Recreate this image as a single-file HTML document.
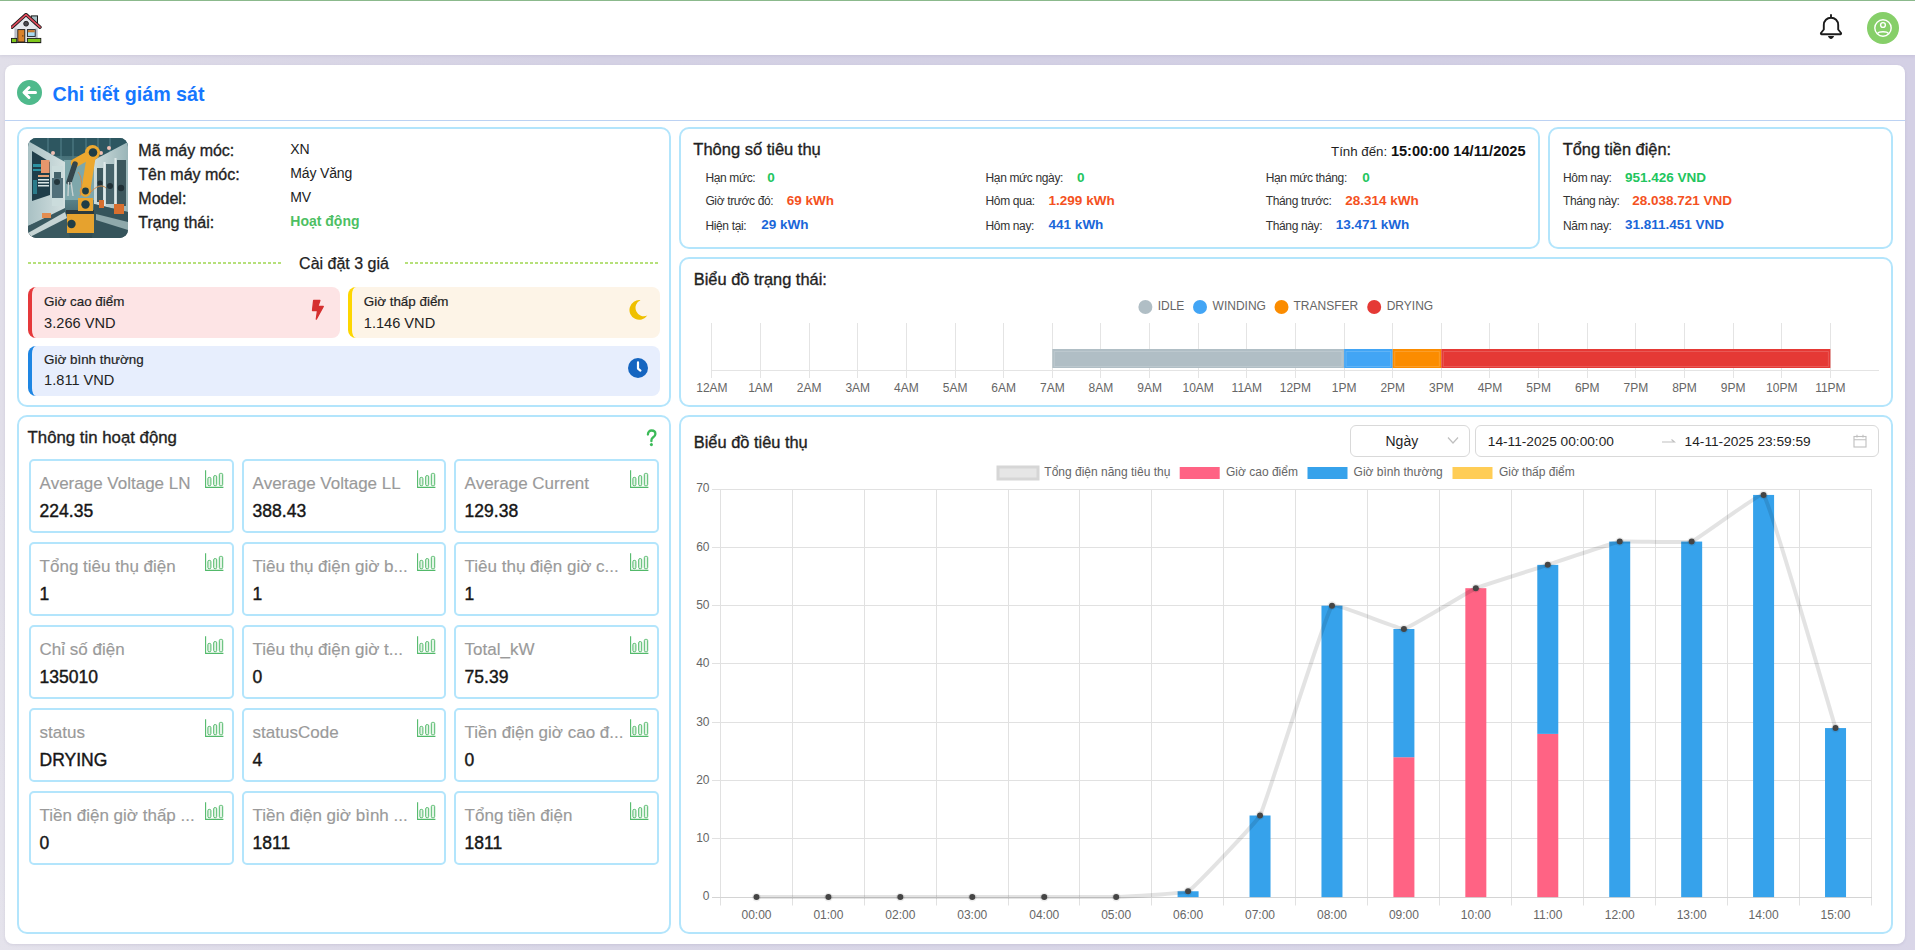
<!DOCTYPE html>
<html><head><meta charset="utf-8"><title>Chi tiết giám sát</title>
<style>
html,body{margin:0;padding:0;}
body{width:1915px;height:950px;overflow:hidden;position:relative;font-family:"Liberation Sans", sans-serif;background:linear-gradient(180deg,rgba(255,255,255,0) 0px,rgba(255,255,255,0) 400px,rgba(255,255,255,0.13) 950px),linear-gradient(90deg,#e1dfe9 0px,#dcd9e7 160px,#d4d1e4 600px,#d2cfe4 1400px,#d4d0e5 1915px);}
.t{position:absolute;white-space:nowrap;}
</style></head><body>
<div style="position:absolute;left:0;top:0;width:1915px;height:1px;background:#8dbb8d"></div>
<div style="position:absolute;left:0;top:1px;width:1915px;height:54px;background:#fff;box-shadow:0 1px 3px rgba(70,60,120,0.10)"></div>
<svg style="position:absolute;left:11px;top:13px" width="31" height="31" viewBox="0 0 31 31">
<rect x="20.3" y="2.9" width="6.2" height="9" fill="#a9c0c6" stroke="#1a1a1a" stroke-width="1"/>
<polygon points="3,14.5 15,3 27,14.5 27,28.5 3,28.5" fill="#e6e8ee"/>
<rect x="3.6" y="15.5" width="2.2" height="12" fill="#b8bcc6"/>
<rect x="24.3" y="15.5" width="2.2" height="12" fill="#b8bcc6"/>
<polyline points="1,14.2 15,1.6 29,14.2" fill="none" stroke="#1a1a1a" stroke-width="3.4" stroke-linejoin="round" stroke-linecap="round"/>
<polyline points="1,14.2 15,1.6 29,14.2" fill="none" stroke="#e04a5c" stroke-width="1.7" stroke-linejoin="round" stroke-linecap="round"/>
<circle cx="15.1" cy="10.7" r="2.4" fill="#4a4850" stroke="#1a1a1a" stroke-width="0.9"/>
<rect x="6.8" y="16.6" width="7" height="12.4" fill="#d9822b" stroke="#1a1a1a" stroke-width="0.9"/>
<rect x="11.2" y="22.2" width="1.2" height="1.4" fill="#6a3a10"/>
<rect x="16.4" y="16.6" width="7.8" height="6.8" fill="#a8dcf2" stroke="#1a1a1a" stroke-width="0.9"/>
<rect x="16.9" y="17.1" width="6.8" height="2.2" fill="#c8782a"/>
<rect x="0.5" y="25.4" width="5.2" height="4.3" fill="#7ec71c" stroke="#1a1a1a" stroke-width="0.9"/>
<rect x="16.4" y="25.4" width="13.4" height="4.3" fill="#7ec71c" stroke="#1a1a1a" stroke-width="0.9"/>
<line x1="0.3" y1="29.5" x2="30" y2="29.5" stroke="#1a1a1a" stroke-width="0.9"/>
</svg>
<svg style="position:absolute;left:1818px;top:14px" width="26" height="27" viewBox="0 0 26 27">
<path d="M13 1 V3.7 M5.8 15.5 V11 C5.8 6.6 9 3.7 13 3.7 C17 3.7 20.2 6.6 20.2 11 V15.5 L23 19 C23.3 19.6 23 20.2 22.4 20.2 H3.6 C3 20.2 2.7 19.6 3 19 Z" fill="none" stroke="#1c1c1c" stroke-width="1.9" stroke-linejoin="round" stroke-linecap="round"/>
<path d="M9.9 22.1 H16.1 C15.4 24 14.4 24.9 13 24.9 C11.6 24.9 10.6 24 9.9 22.1 Z" fill="#1c1c1c"/>
</svg>
<svg style="position:absolute;left:1867px;top:12px" width="32" height="32" viewBox="0 0 32 32">
<circle cx="16" cy="16" r="16" fill="#86cf69"/>
<circle cx="16" cy="16" r="8.2" fill="none" stroke="#fff" stroke-width="1.4"/>
<circle cx="16" cy="13" r="2.4" fill="none" stroke="#fff" stroke-width="1.4"/>
<path d="M10.5 21.6 C12 19.2 20 19.2 21.5 21.6" fill="none" stroke="#fff" stroke-width="1.4"/>
</svg>
<div style="position:absolute;left:5px;top:65px;width:1900px;height:879px;background:#fff;border-radius:8px;box-shadow:0 1px 3px rgba(80,70,120,0.12)"></div>
<svg style="position:absolute;left:17px;top:80px" width="25" height="25" viewBox="0 0 25 25">
<circle cx="12.5" cy="12.5" r="12.5" fill="#4fba8c"/>
<path d="M18.5 12.5 H7.5 M12 7.5 L7 12.5 L12 17.5" fill="none" stroke="#fff" stroke-width="3" stroke-linecap="round" stroke-linejoin="round"/>
</svg>
<div class="t" style="left:52.50px;top:84.64px;font-size:19.7px;line-height:19.7px;color:#1677ff;font-weight:700;">Chi tiết giám sát</div>
<div style="position:absolute;left:5px;top:120px;width:1900px;height:1px;background:#bcd2f3"></div>
<div style="position:absolute;left:17px;top:127px;width:654px;height:280px;box-sizing:border-box;border:2px solid #b3e5fc;border-radius:10px;"></div>
<div style="position:absolute;left:17px;top:415px;width:654px;height:519px;box-sizing:border-box;border:2px solid #b3e5fc;border-radius:10px;"></div>
<div style="position:absolute;left:679px;top:127px;width:861px;height:122px;box-sizing:border-box;border:2px solid #b3e5fc;border-radius:10px;"></div>
<div style="position:absolute;left:1548px;top:127px;width:345px;height:122px;box-sizing:border-box;border:2px solid #b3e5fc;border-radius:10px;"></div>
<div style="position:absolute;left:679px;top:257px;width:1214px;height:150px;box-sizing:border-box;border:2px solid #b3e5fc;border-radius:10px;"></div>
<div style="position:absolute;left:679px;top:415px;width:1214px;height:519px;box-sizing:border-box;border:2px solid #b3e5fc;border-radius:10px;"></div>
<svg style="position:absolute;left:28px;top:138px" width="100" height="100" viewBox="0 0 100 100">
<defs><linearGradient id="bg" x1="0" y1="0" x2="0" y2="1"><stop offset="0" stop-color="#2a525c"/><stop offset="0.45" stop-color="#6d9aa0"/><stop offset="1" stop-color="#2c4850"/></linearGradient>
<linearGradient id="wl" x1="0" y1="0" x2="1" y2="0"><stop offset="0" stop-color="#a9c1c4"/><stop offset="1" stop-color="#d3e0e0"/></linearGradient>
<linearGradient id="wr" x1="0" y1="0" x2="1" y2="0"><stop offset="0" stop-color="#cddcdc"/><stop offset="1" stop-color="#9ab5b8"/></linearGradient>
<clipPath id="cp"><rect width="100" height="100" rx="8.5"/></clipPath></defs>
<g clip-path="url(#cp)">
<rect width="100" height="100" fill="url(#bg)"/>
<rect x="0" y="0" width="100" height="18" fill="#2d5660"/>
<path d="M20 0V20M33 0V22M45 0V22M58 0V20M70 0V20M82 0V18" stroke="#4f7d86" stroke-width="1.2"/>
<rect x="36" y="22" width="30" height="40" fill="#7ea7ab"/>
<polygon points="0,3 37,24 37,72 0,88" fill="url(#wl)"/>
<polygon points="4,13 22,24 22,57 4,63" fill="#1f3e4a"/>
<rect x="13" y="22" width="8.5" height="13" fill="#e8966c"/>
<rect x="5" y="26" width="8" height="3" fill="#2c92a2"/><rect x="5" y="31" width="8" height="2" fill="#2c92a2"/>
<rect x="10" y="37" width="11" height="2" fill="#e3a277"/><rect x="10" y="41" width="11" height="1.5" fill="#d9e6e6"/><rect x="10" y="44" width="11" height="1.5" fill="#d9e6e6"/><rect x="10" y="47" width="11" height="1.5" fill="#d9e6e6"/>
<rect x="5" y="42" width="4" height="14" fill="#2a7b8a"/>
<rect x="24" y="28" width="11" height="40" fill="#cbdcdc"/>
<rect x="26" y="34" width="7" height="16" fill="#45636b"/>
<polygon points="100,4 66,22 66,66 100,74" fill="url(#wr)"/>
<rect x="69" y="30" width="6" height="34" fill="#3f5a60"/><rect x="78" y="26" width="8" height="40" fill="#46636a"/><rect x="89" y="22" width="9" height="46" fill="#3c575d"/>
<rect x="75.5" y="24" width="2" height="44" fill="#dfe9e9"/><rect x="86.5" y="20" width="2" height="48" fill="#dfe9e9"/>
<circle cx="72" cy="45" r="2.5" fill="#1f3036"/><circle cx="82" cy="48" r="3" fill="#1f3036"/><circle cx="93" cy="50" r="3.2" fill="#1f3036"/>
<rect x="24" y="40" width="11" height="20" fill="#52707a"/>
<circle cx="29" cy="44" r="3" fill="#24363c"/>
<polygon points="0,88 37,70 42,100 0,100" fill="#3a5960"/>
<polygon points="0,95 37,74 39,80 0,100" fill="#c6d4d4"/>
<polygon points="100,74 66,66 64,100 100,100" fill="#35545b"/>
<polygon points="100,84 68,76 68,82 100,92" fill="#8fa9ab"/>
<rect x="86" y="66" width="10" height="10" fill="#d86f2e"/><rect x="71" y="62" width="5" height="8" fill="#d86f2e"/>
<rect x="14" y="75" width="9" height="5" fill="#e38d50"/>
<circle cx="25" cy="15" r="2" fill="#f0bfb3"/><circle cx="73" cy="15" r="2" fill="#f0bfb3"/><circle cx="81" cy="10" r="2" fill="#f0bfb3"/>
<rect x="39" y="75" width="27" height="20" fill="#e6a22e"/>
<rect x="38" y="72" width="28" height="4" fill="#2b3a3e"/>
<circle cx="43.5" cy="86" r="4.2" fill="#1f3d46"/>
<rect x="50" y="60" width="15" height="13" fill="#eaa630"/>
<circle cx="57.5" cy="66.5" r="4.2" fill="#1f3d46"/>
<path d="M57.5 54 L63 20" stroke="#eda82f" stroke-width="9" stroke-linecap="round"/>
<circle cx="57.5" cy="53" r="5.8" fill="#eaa630"/><circle cx="57.5" cy="53" r="3.4" fill="#1f3d46"/>
<path d="M63 16 L47 25" stroke="#eda82f" stroke-width="8.5" stroke-linecap="round"/>
<circle cx="64.5" cy="14.5" r="7.5" fill="#eda82f"/><circle cx="65" cy="14.5" r="4.3" fill="#1f3d46"/>
<path d="M47 26 L41 44" stroke="#34464c" stroke-width="5.5" stroke-linecap="round"/>
<path d="M40.5 44 L40 58 M43 44 L45 58" stroke="#c9d2d2" stroke-width="1.4"/>
<path d="M50 34 C55 40 54 50 52 58" stroke="#d28a4a" stroke-width="1" fill="none"/>
<path d="M62 55 C68 48 74 46 78 50" stroke="#d28a4a" stroke-width="1" fill="none"/>
</g></svg>
<div class="t" style="left:138.30px;top:142.71px;font-size:16px;line-height:16px;color:#1f1f1f;font-weight:400;-webkit-text-stroke:0.35px #1f1f1f;">Mã máy móc:</div>
<div class="t" style="left:290.30px;top:142.37px;font-size:14px;line-height:14px;color:#222;font-weight:400;letter-spacing:-0.15px;">XN</div>
<div class="t" style="left:138.30px;top:166.71px;font-size:16px;line-height:16px;color:#1f1f1f;font-weight:400;-webkit-text-stroke:0.35px #1f1f1f;">Tên máy móc:</div>
<div class="t" style="left:290.30px;top:166.37px;font-size:14px;line-height:14px;color:#222;font-weight:400;letter-spacing:-0.15px;">Máy Văng</div>
<div class="t" style="left:138.30px;top:190.71px;font-size:16px;line-height:16px;color:#1f1f1f;font-weight:400;-webkit-text-stroke:0.35px #1f1f1f;">Model:</div>
<div class="t" style="left:290.30px;top:190.37px;font-size:14px;line-height:14px;color:#222;font-weight:400;letter-spacing:-0.15px;">MV</div>
<div class="t" style="left:138.30px;top:214.71px;font-size:16px;line-height:16px;color:#1f1f1f;font-weight:400;-webkit-text-stroke:0.35px #1f1f1f;">Trạng thái:</div>
<div class="t" style="left:290.30px;top:214.37px;font-size:14px;line-height:14px;color:#4dbf63;font-weight:700;">Hoạt động</div>
<div class="t" style="left:-156.00px;width:1000px;text-align:center;top:255.71px;font-size:16px;line-height:16px;color:#222;font-weight:400;-webkit-text-stroke:0.25px #222;">Cài đặt 3 giá</div>
<div style="position:absolute;left:28px;top:262px;width:255px;height:2px;background:repeating-linear-gradient(90deg,#b6e07a 0 3px,transparent 3px 5px)"></div>
<div style="position:absolute;left:405px;top:262px;width:255px;height:2px;background:repeating-linear-gradient(90deg,#b6e07a 0 3px,transparent 3px 5px)"></div>
<div style="position:absolute;left:28px;top:287px;width:312px;height:51px;box-sizing:border-box;background:#fde4e5;border-left:4px solid #e5393b;border-radius:8px"></div>
<div style="position:absolute;left:348px;top:287px;width:312px;height:51px;box-sizing:border-box;background:#fdf4e7;border-left:4px solid #fdd600;border-radius:8px"></div>
<div style="position:absolute;left:28px;top:346px;width:632px;height:50px;box-sizing:border-box;background:#e7eefd;border-left:4px solid #1e86e3;border-radius:8px"></div>
<div class="t" style="left:44.10px;top:294.87px;font-size:13.4px;line-height:13.4px;color:#1f1f1f;font-weight:400;-webkit-text-stroke:0.2px #1f1f1f;">Giờ cao điểm</div>
<div class="t" style="left:44.10px;top:315.57px;font-size:14.6px;line-height:14.6px;color:#222;font-weight:400;">3.266 VND</div>
<div class="t" style="left:363.80px;top:294.87px;font-size:13.4px;line-height:13.4px;color:#1f1f1f;font-weight:400;-webkit-text-stroke:0.2px #1f1f1f;">Giờ thấp điểm</div>
<div class="t" style="left:363.80px;top:315.57px;font-size:14.6px;line-height:14.6px;color:#222;font-weight:400;">1.146 VND</div>
<div class="t" style="left:44.10px;top:353.47px;font-size:13.4px;line-height:13.4px;color:#1f1f1f;font-weight:400;-webkit-text-stroke:0.2px #1f1f1f;">Giờ bình thường</div>
<div class="t" style="left:44.10px;top:373.37px;font-size:14.6px;line-height:14.6px;color:#222;font-weight:400;">1.811 VND</div>
<svg style="position:absolute;left:311px;top:299px" width="14" height="22" viewBox="0 0 14 22">
<path d="M2.6 1.5 H8.9 L6.9 7.4 H12.3 L5.3 20.1 L6.5 11.5 H1.5 Z" fill="#d52f2f" stroke="#d52f2f" stroke-width="1.3" stroke-linejoin="round"/></svg>
<svg style="position:absolute;left:628px;top:299px" width="20" height="22" viewBox="0 0 20 22">
<path d="M12.5 1.2 A9.8 9.8 0 1 0 19.3 16.5 A7.4 7.4 0 0 1 12.5 1.2 Z" fill="#efc000"/></svg>
<svg style="position:absolute;left:628px;top:358px" width="20" height="20" viewBox="0 0 20 20">
<circle cx="10" cy="10" r="10" fill="#1565c0"/><path d="M10 4.4 V10.6 L12.4 12.6" fill="none" stroke="#fff" stroke-width="2.2" stroke-linecap="round" stroke-linejoin="round"/></svg>
<div class="t" style="left:27.60px;top:429.55px;font-size:16.8px;line-height:16.8px;color:#1f1f1f;font-weight:400;-webkit-text-stroke:0.35px #1f1f1f;">Thông tin hoạt động</div>
<svg style="position:absolute;left:645px;top:429px" width="14" height="19" viewBox="0 0 14 19"><path d="M2.9 5.6 C2.9 3 4.6 1.5 6.6 1.5 C8.8 1.5 10.4 3 10.4 5 C10.4 6.9 9 7.7 7.9 8.5 C6.9 9.2 6.4 10 6.4 11.4 V12.2" fill="none" stroke="#3cba58" stroke-width="2.3" stroke-linecap="round"/><circle cx="6.4" cy="15.6" r="1.55" fill="#3cba58"/></svg>
<div style="position:absolute;left:29px;top:459px;width:205px;height:74px;box-sizing:border-box;border:2px solid #b3e5fc;border-radius:5px"></div>
<div class="t" style="left:39.60px;top:474.88px;font-size:17px;line-height:17px;color:#9a9a9a;font-weight:400;-webkit-text-stroke:0.15px #9a9a9a;white-space:nowrap;">Average Voltage LN</div>
<div class="t" style="left:39.60px;top:502.57px;font-size:17.5px;line-height:17.5px;color:#161616;font-weight:400;-webkit-text-stroke:0.4px #161616;">224.35</div>
<svg style="position:absolute;left:204.7px;top:470px" width="19" height="19" viewBox="0 0 19 19">
<path d="M0.6 0.2 V17.4 H18.4" fill="none" stroke="#52b96a" stroke-width="1.1"/>
<rect x="2.9" y="7.4" width="3" height="8.3" rx="1.2" fill="#e4f4e6" stroke="#52b96a" stroke-width="1"/>
<rect x="8.7" y="5.6" width="3" height="10.1" rx="1.2" fill="#e4f4e6" stroke="#52b96a" stroke-width="1"/>
<rect x="14.3" y="3.4" width="3.4" height="12.3" rx="1.2" fill="#e4f4e6" stroke="#52b96a" stroke-width="1"/>
</svg>
<div style="position:absolute;left:242px;top:459px;width:204px;height:74px;box-sizing:border-box;border:2px solid #b3e5fc;border-radius:5px"></div>
<div class="t" style="left:252.60px;top:474.88px;font-size:17px;line-height:17px;color:#9a9a9a;font-weight:400;-webkit-text-stroke:0.15px #9a9a9a;white-space:nowrap;">Average Voltage LL</div>
<div class="t" style="left:252.60px;top:502.57px;font-size:17.5px;line-height:17.5px;color:#161616;font-weight:400;-webkit-text-stroke:0.4px #161616;">388.43</div>
<svg style="position:absolute;left:416.7px;top:470px" width="19" height="19" viewBox="0 0 19 19">
<path d="M0.6 0.2 V17.4 H18.4" fill="none" stroke="#52b96a" stroke-width="1.1"/>
<rect x="2.9" y="7.4" width="3" height="8.3" rx="1.2" fill="#e4f4e6" stroke="#52b96a" stroke-width="1"/>
<rect x="8.7" y="5.6" width="3" height="10.1" rx="1.2" fill="#e4f4e6" stroke="#52b96a" stroke-width="1"/>
<rect x="14.3" y="3.4" width="3.4" height="12.3" rx="1.2" fill="#e4f4e6" stroke="#52b96a" stroke-width="1"/>
</svg>
<div style="position:absolute;left:454px;top:459px;width:205px;height:74px;box-sizing:border-box;border:2px solid #b3e5fc;border-radius:5px"></div>
<div class="t" style="left:464.60px;top:474.88px;font-size:17px;line-height:17px;color:#9a9a9a;font-weight:400;-webkit-text-stroke:0.15px #9a9a9a;white-space:nowrap;">Average Current</div>
<div class="t" style="left:464.60px;top:502.57px;font-size:17.5px;line-height:17.5px;color:#161616;font-weight:400;-webkit-text-stroke:0.4px #161616;">129.38</div>
<svg style="position:absolute;left:629.7px;top:470px" width="19" height="19" viewBox="0 0 19 19">
<path d="M0.6 0.2 V17.4 H18.4" fill="none" stroke="#52b96a" stroke-width="1.1"/>
<rect x="2.9" y="7.4" width="3" height="8.3" rx="1.2" fill="#e4f4e6" stroke="#52b96a" stroke-width="1"/>
<rect x="8.7" y="5.6" width="3" height="10.1" rx="1.2" fill="#e4f4e6" stroke="#52b96a" stroke-width="1"/>
<rect x="14.3" y="3.4" width="3.4" height="12.3" rx="1.2" fill="#e4f4e6" stroke="#52b96a" stroke-width="1"/>
</svg>
<div style="position:absolute;left:29px;top:542px;width:205px;height:74px;box-sizing:border-box;border:2px solid #b3e5fc;border-radius:5px"></div>
<div class="t" style="left:39.60px;top:557.88px;font-size:17px;line-height:17px;color:#9a9a9a;font-weight:400;-webkit-text-stroke:0.15px #9a9a9a;white-space:nowrap;">Tổng tiêu thụ điện</div>
<div class="t" style="left:39.60px;top:585.57px;font-size:17.5px;line-height:17.5px;color:#161616;font-weight:400;-webkit-text-stroke:0.4px #161616;">1</div>
<svg style="position:absolute;left:204.7px;top:553px" width="19" height="19" viewBox="0 0 19 19">
<path d="M0.6 0.2 V17.4 H18.4" fill="none" stroke="#52b96a" stroke-width="1.1"/>
<rect x="2.9" y="7.4" width="3" height="8.3" rx="1.2" fill="#e4f4e6" stroke="#52b96a" stroke-width="1"/>
<rect x="8.7" y="5.6" width="3" height="10.1" rx="1.2" fill="#e4f4e6" stroke="#52b96a" stroke-width="1"/>
<rect x="14.3" y="3.4" width="3.4" height="12.3" rx="1.2" fill="#e4f4e6" stroke="#52b96a" stroke-width="1"/>
</svg>
<div style="position:absolute;left:242px;top:542px;width:204px;height:74px;box-sizing:border-box;border:2px solid #b3e5fc;border-radius:5px"></div>
<div class="t" style="left:252.60px;top:557.88px;font-size:17px;line-height:17px;color:#9a9a9a;font-weight:400;-webkit-text-stroke:0.15px #9a9a9a;white-space:nowrap;">Tiêu thụ điện giờ b...</div>
<div class="t" style="left:252.60px;top:585.57px;font-size:17.5px;line-height:17.5px;color:#161616;font-weight:400;-webkit-text-stroke:0.4px #161616;">1</div>
<svg style="position:absolute;left:416.7px;top:553px" width="19" height="19" viewBox="0 0 19 19">
<path d="M0.6 0.2 V17.4 H18.4" fill="none" stroke="#52b96a" stroke-width="1.1"/>
<rect x="2.9" y="7.4" width="3" height="8.3" rx="1.2" fill="#e4f4e6" stroke="#52b96a" stroke-width="1"/>
<rect x="8.7" y="5.6" width="3" height="10.1" rx="1.2" fill="#e4f4e6" stroke="#52b96a" stroke-width="1"/>
<rect x="14.3" y="3.4" width="3.4" height="12.3" rx="1.2" fill="#e4f4e6" stroke="#52b96a" stroke-width="1"/>
</svg>
<div style="position:absolute;left:454px;top:542px;width:205px;height:74px;box-sizing:border-box;border:2px solid #b3e5fc;border-radius:5px"></div>
<div class="t" style="left:464.60px;top:557.88px;font-size:17px;line-height:17px;color:#9a9a9a;font-weight:400;-webkit-text-stroke:0.15px #9a9a9a;white-space:nowrap;">Tiêu thụ điện giờ c...</div>
<div class="t" style="left:464.60px;top:585.57px;font-size:17.5px;line-height:17.5px;color:#161616;font-weight:400;-webkit-text-stroke:0.4px #161616;">1</div>
<svg style="position:absolute;left:629.7px;top:553px" width="19" height="19" viewBox="0 0 19 19">
<path d="M0.6 0.2 V17.4 H18.4" fill="none" stroke="#52b96a" stroke-width="1.1"/>
<rect x="2.9" y="7.4" width="3" height="8.3" rx="1.2" fill="#e4f4e6" stroke="#52b96a" stroke-width="1"/>
<rect x="8.7" y="5.6" width="3" height="10.1" rx="1.2" fill="#e4f4e6" stroke="#52b96a" stroke-width="1"/>
<rect x="14.3" y="3.4" width="3.4" height="12.3" rx="1.2" fill="#e4f4e6" stroke="#52b96a" stroke-width="1"/>
</svg>
<div style="position:absolute;left:29px;top:625px;width:205px;height:74px;box-sizing:border-box;border:2px solid #b3e5fc;border-radius:5px"></div>
<div class="t" style="left:39.60px;top:640.88px;font-size:17px;line-height:17px;color:#9a9a9a;font-weight:400;-webkit-text-stroke:0.15px #9a9a9a;white-space:nowrap;">Chỉ số điện</div>
<div class="t" style="left:39.60px;top:668.57px;font-size:17.5px;line-height:17.5px;color:#161616;font-weight:400;-webkit-text-stroke:0.4px #161616;">135010</div>
<svg style="position:absolute;left:204.7px;top:636px" width="19" height="19" viewBox="0 0 19 19">
<path d="M0.6 0.2 V17.4 H18.4" fill="none" stroke="#52b96a" stroke-width="1.1"/>
<rect x="2.9" y="7.4" width="3" height="8.3" rx="1.2" fill="#e4f4e6" stroke="#52b96a" stroke-width="1"/>
<rect x="8.7" y="5.6" width="3" height="10.1" rx="1.2" fill="#e4f4e6" stroke="#52b96a" stroke-width="1"/>
<rect x="14.3" y="3.4" width="3.4" height="12.3" rx="1.2" fill="#e4f4e6" stroke="#52b96a" stroke-width="1"/>
</svg>
<div style="position:absolute;left:242px;top:625px;width:204px;height:74px;box-sizing:border-box;border:2px solid #b3e5fc;border-radius:5px"></div>
<div class="t" style="left:252.60px;top:640.88px;font-size:17px;line-height:17px;color:#9a9a9a;font-weight:400;-webkit-text-stroke:0.15px #9a9a9a;white-space:nowrap;">Tiêu thụ điện giờ t...</div>
<div class="t" style="left:252.60px;top:668.57px;font-size:17.5px;line-height:17.5px;color:#161616;font-weight:400;-webkit-text-stroke:0.4px #161616;">0</div>
<svg style="position:absolute;left:416.7px;top:636px" width="19" height="19" viewBox="0 0 19 19">
<path d="M0.6 0.2 V17.4 H18.4" fill="none" stroke="#52b96a" stroke-width="1.1"/>
<rect x="2.9" y="7.4" width="3" height="8.3" rx="1.2" fill="#e4f4e6" stroke="#52b96a" stroke-width="1"/>
<rect x="8.7" y="5.6" width="3" height="10.1" rx="1.2" fill="#e4f4e6" stroke="#52b96a" stroke-width="1"/>
<rect x="14.3" y="3.4" width="3.4" height="12.3" rx="1.2" fill="#e4f4e6" stroke="#52b96a" stroke-width="1"/>
</svg>
<div style="position:absolute;left:454px;top:625px;width:205px;height:74px;box-sizing:border-box;border:2px solid #b3e5fc;border-radius:5px"></div>
<div class="t" style="left:464.60px;top:640.88px;font-size:17px;line-height:17px;color:#9a9a9a;font-weight:400;-webkit-text-stroke:0.15px #9a9a9a;white-space:nowrap;">Total_kW</div>
<div class="t" style="left:464.60px;top:668.57px;font-size:17.5px;line-height:17.5px;color:#161616;font-weight:400;-webkit-text-stroke:0.4px #161616;">75.39</div>
<svg style="position:absolute;left:629.7px;top:636px" width="19" height="19" viewBox="0 0 19 19">
<path d="M0.6 0.2 V17.4 H18.4" fill="none" stroke="#52b96a" stroke-width="1.1"/>
<rect x="2.9" y="7.4" width="3" height="8.3" rx="1.2" fill="#e4f4e6" stroke="#52b96a" stroke-width="1"/>
<rect x="8.7" y="5.6" width="3" height="10.1" rx="1.2" fill="#e4f4e6" stroke="#52b96a" stroke-width="1"/>
<rect x="14.3" y="3.4" width="3.4" height="12.3" rx="1.2" fill="#e4f4e6" stroke="#52b96a" stroke-width="1"/>
</svg>
<div style="position:absolute;left:29px;top:708px;width:205px;height:74px;box-sizing:border-box;border:2px solid #b3e5fc;border-radius:5px"></div>
<div class="t" style="left:39.60px;top:723.88px;font-size:17px;line-height:17px;color:#9a9a9a;font-weight:400;-webkit-text-stroke:0.15px #9a9a9a;white-space:nowrap;">status</div>
<div class="t" style="left:39.60px;top:751.57px;font-size:17.5px;line-height:17.5px;color:#161616;font-weight:400;-webkit-text-stroke:0.4px #161616;">DRYING</div>
<svg style="position:absolute;left:204.7px;top:719px" width="19" height="19" viewBox="0 0 19 19">
<path d="M0.6 0.2 V17.4 H18.4" fill="none" stroke="#52b96a" stroke-width="1.1"/>
<rect x="2.9" y="7.4" width="3" height="8.3" rx="1.2" fill="#e4f4e6" stroke="#52b96a" stroke-width="1"/>
<rect x="8.7" y="5.6" width="3" height="10.1" rx="1.2" fill="#e4f4e6" stroke="#52b96a" stroke-width="1"/>
<rect x="14.3" y="3.4" width="3.4" height="12.3" rx="1.2" fill="#e4f4e6" stroke="#52b96a" stroke-width="1"/>
</svg>
<div style="position:absolute;left:242px;top:708px;width:204px;height:74px;box-sizing:border-box;border:2px solid #b3e5fc;border-radius:5px"></div>
<div class="t" style="left:252.60px;top:723.88px;font-size:17px;line-height:17px;color:#9a9a9a;font-weight:400;-webkit-text-stroke:0.15px #9a9a9a;white-space:nowrap;">statusCode</div>
<div class="t" style="left:252.60px;top:751.57px;font-size:17.5px;line-height:17.5px;color:#161616;font-weight:400;-webkit-text-stroke:0.4px #161616;">4</div>
<svg style="position:absolute;left:416.7px;top:719px" width="19" height="19" viewBox="0 0 19 19">
<path d="M0.6 0.2 V17.4 H18.4" fill="none" stroke="#52b96a" stroke-width="1.1"/>
<rect x="2.9" y="7.4" width="3" height="8.3" rx="1.2" fill="#e4f4e6" stroke="#52b96a" stroke-width="1"/>
<rect x="8.7" y="5.6" width="3" height="10.1" rx="1.2" fill="#e4f4e6" stroke="#52b96a" stroke-width="1"/>
<rect x="14.3" y="3.4" width="3.4" height="12.3" rx="1.2" fill="#e4f4e6" stroke="#52b96a" stroke-width="1"/>
</svg>
<div style="position:absolute;left:454px;top:708px;width:205px;height:74px;box-sizing:border-box;border:2px solid #b3e5fc;border-radius:5px"></div>
<div class="t" style="left:464.60px;top:723.88px;font-size:17px;line-height:17px;color:#9a9a9a;font-weight:400;-webkit-text-stroke:0.15px #9a9a9a;white-space:nowrap;">Tiền điện giờ cao đ...</div>
<div class="t" style="left:464.60px;top:751.57px;font-size:17.5px;line-height:17.5px;color:#161616;font-weight:400;-webkit-text-stroke:0.4px #161616;">0</div>
<svg style="position:absolute;left:629.7px;top:719px" width="19" height="19" viewBox="0 0 19 19">
<path d="M0.6 0.2 V17.4 H18.4" fill="none" stroke="#52b96a" stroke-width="1.1"/>
<rect x="2.9" y="7.4" width="3" height="8.3" rx="1.2" fill="#e4f4e6" stroke="#52b96a" stroke-width="1"/>
<rect x="8.7" y="5.6" width="3" height="10.1" rx="1.2" fill="#e4f4e6" stroke="#52b96a" stroke-width="1"/>
<rect x="14.3" y="3.4" width="3.4" height="12.3" rx="1.2" fill="#e4f4e6" stroke="#52b96a" stroke-width="1"/>
</svg>
<div style="position:absolute;left:29px;top:791px;width:205px;height:74px;box-sizing:border-box;border:2px solid #b3e5fc;border-radius:5px"></div>
<div class="t" style="left:39.60px;top:806.88px;font-size:17px;line-height:17px;color:#9a9a9a;font-weight:400;-webkit-text-stroke:0.15px #9a9a9a;white-space:nowrap;">Tiền điện giờ thấp ...</div>
<div class="t" style="left:39.60px;top:834.57px;font-size:17.5px;line-height:17.5px;color:#161616;font-weight:400;-webkit-text-stroke:0.4px #161616;">0</div>
<svg style="position:absolute;left:204.7px;top:802px" width="19" height="19" viewBox="0 0 19 19">
<path d="M0.6 0.2 V17.4 H18.4" fill="none" stroke="#52b96a" stroke-width="1.1"/>
<rect x="2.9" y="7.4" width="3" height="8.3" rx="1.2" fill="#e4f4e6" stroke="#52b96a" stroke-width="1"/>
<rect x="8.7" y="5.6" width="3" height="10.1" rx="1.2" fill="#e4f4e6" stroke="#52b96a" stroke-width="1"/>
<rect x="14.3" y="3.4" width="3.4" height="12.3" rx="1.2" fill="#e4f4e6" stroke="#52b96a" stroke-width="1"/>
</svg>
<div style="position:absolute;left:242px;top:791px;width:204px;height:74px;box-sizing:border-box;border:2px solid #b3e5fc;border-radius:5px"></div>
<div class="t" style="left:252.60px;top:806.88px;font-size:17px;line-height:17px;color:#9a9a9a;font-weight:400;-webkit-text-stroke:0.15px #9a9a9a;white-space:nowrap;">Tiền điện giờ bình ...</div>
<div class="t" style="left:252.60px;top:834.57px;font-size:17.5px;line-height:17.5px;color:#161616;font-weight:400;-webkit-text-stroke:0.4px #161616;">1811</div>
<svg style="position:absolute;left:416.7px;top:802px" width="19" height="19" viewBox="0 0 19 19">
<path d="M0.6 0.2 V17.4 H18.4" fill="none" stroke="#52b96a" stroke-width="1.1"/>
<rect x="2.9" y="7.4" width="3" height="8.3" rx="1.2" fill="#e4f4e6" stroke="#52b96a" stroke-width="1"/>
<rect x="8.7" y="5.6" width="3" height="10.1" rx="1.2" fill="#e4f4e6" stroke="#52b96a" stroke-width="1"/>
<rect x="14.3" y="3.4" width="3.4" height="12.3" rx="1.2" fill="#e4f4e6" stroke="#52b96a" stroke-width="1"/>
</svg>
<div style="position:absolute;left:454px;top:791px;width:205px;height:74px;box-sizing:border-box;border:2px solid #b3e5fc;border-radius:5px"></div>
<div class="t" style="left:464.60px;top:806.88px;font-size:17px;line-height:17px;color:#9a9a9a;font-weight:400;-webkit-text-stroke:0.15px #9a9a9a;white-space:nowrap;">Tổng tiền điện</div>
<div class="t" style="left:464.60px;top:834.57px;font-size:17.5px;line-height:17.5px;color:#161616;font-weight:400;-webkit-text-stroke:0.4px #161616;">1811</div>
<svg style="position:absolute;left:629.7px;top:802px" width="19" height="19" viewBox="0 0 19 19">
<path d="M0.6 0.2 V17.4 H18.4" fill="none" stroke="#52b96a" stroke-width="1.1"/>
<rect x="2.9" y="7.4" width="3" height="8.3" rx="1.2" fill="#e4f4e6" stroke="#52b96a" stroke-width="1"/>
<rect x="8.7" y="5.6" width="3" height="10.1" rx="1.2" fill="#e4f4e6" stroke="#52b96a" stroke-width="1"/>
<rect x="14.3" y="3.4" width="3.4" height="12.3" rx="1.2" fill="#e4f4e6" stroke="#52b96a" stroke-width="1"/>
</svg>
<div class="t" style="left:693.30px;top:141.30px;font-size:16.5px;line-height:16.5px;color:#1f1f1f;font-weight:400;-webkit-text-stroke:0.35px #1f1f1f;">Thông số tiêu thụ</div>
<div class="t" style="right:389.4px;top:143.90px;font-size:13.3px;line-height:14px;color:#1f1f1f;white-space:nowrap">Tính đến: <b style="font-size:14.6px;color:#111">15:00:00 14/11/2025</b></div>
<div class="t" style="left:705.40px;top:172.03px;font-size:12px;line-height:12px;color:#333;font-weight:400;letter-spacing:-0.35px;">Hạn mức:</div>
<div class="t" style="left:767.30px;top:170.79px;font-size:13.5px;line-height:13.5px;color:#22c55e;font-weight:700;">0</div>
<div class="t" style="left:985.50px;top:172.03px;font-size:12px;line-height:12px;color:#333;font-weight:400;letter-spacing:-0.35px;">Hạn mức ngày:</div>
<div class="t" style="left:1076.90px;top:170.79px;font-size:13.5px;line-height:13.5px;color:#22c55e;font-weight:700;">0</div>
<div class="t" style="left:1265.70px;top:172.03px;font-size:12px;line-height:12px;color:#333;font-weight:400;letter-spacing:-0.35px;">Hạn mức tháng:</div>
<div class="t" style="left:1362.30px;top:170.79px;font-size:13.5px;line-height:13.5px;color:#22c55e;font-weight:700;">0</div>
<div class="t" style="left:705.40px;top:195.23px;font-size:12px;line-height:12px;color:#333;font-weight:400;letter-spacing:-0.35px;">Giờ trước đó:</div>
<div class="t" style="left:786.70px;top:193.99px;font-size:13.5px;line-height:13.5px;color:#f4511e;font-weight:700;">69 kWh</div>
<div class="t" style="left:985.50px;top:195.23px;font-size:12px;line-height:12px;color:#333;font-weight:400;letter-spacing:-0.35px;">Hôm qua:</div>
<div class="t" style="left:1048.60px;top:193.99px;font-size:13.5px;line-height:13.5px;color:#f4511e;font-weight:700;">1.299 kWh</div>
<div class="t" style="left:1265.70px;top:195.23px;font-size:12px;line-height:12px;color:#333;font-weight:400;letter-spacing:-0.35px;">Tháng trước:</div>
<div class="t" style="left:1345.20px;top:193.99px;font-size:13.5px;line-height:13.5px;color:#f4511e;font-weight:700;">28.314 kWh</div>
<div class="t" style="left:705.40px;top:219.53px;font-size:12px;line-height:12px;color:#333;font-weight:400;letter-spacing:-0.35px;">Hiện tại:</div>
<div class="t" style="left:761.20px;top:218.29px;font-size:13.5px;line-height:13.5px;color:#1a66d9;font-weight:700;">29 kWh</div>
<div class="t" style="left:985.50px;top:219.53px;font-size:12px;line-height:12px;color:#333;font-weight:400;letter-spacing:-0.35px;">Hôm nay:</div>
<div class="t" style="left:1048.60px;top:218.29px;font-size:13.5px;line-height:13.5px;color:#1a66d9;font-weight:700;">441 kWh</div>
<div class="t" style="left:1265.70px;top:219.53px;font-size:12px;line-height:12px;color:#333;font-weight:400;letter-spacing:-0.35px;">Tháng này:</div>
<div class="t" style="left:1335.80px;top:218.29px;font-size:13.5px;line-height:13.5px;color:#1a66d9;font-weight:700;">13.471 kWh</div>
<div class="t" style="left:1562.70px;top:141.38px;font-size:16.4px;line-height:16.4px;color:#1f1f1f;font-weight:400;-webkit-text-stroke:0.35px #1f1f1f;">Tổng tiền điện:</div>
<div class="t" style="left:1563.00px;top:172.03px;font-size:12px;line-height:12px;color:#333;font-weight:400;letter-spacing:-0.35px;">Hôm nay:</div>
<div class="t" style="left:1625.00px;top:170.79px;font-size:13.5px;line-height:13.5px;color:#22c55e;font-weight:700;">951.426 VND</div>
<div class="t" style="left:1563.00px;top:195.23px;font-size:12px;line-height:12px;color:#333;font-weight:400;letter-spacing:-0.35px;">Tháng này:</div>
<div class="t" style="left:1632.30px;top:193.99px;font-size:13.5px;line-height:13.5px;color:#f4511e;font-weight:700;">28.038.721 VND</div>
<div class="t" style="left:1563.00px;top:219.53px;font-size:12px;line-height:12px;color:#333;font-weight:400;letter-spacing:-0.35px;">Năm nay:</div>
<div class="t" style="left:1625.00px;top:218.29px;font-size:13.5px;line-height:13.5px;color:#1a66d9;font-weight:700;">31.811.451 VND</div>
<div class="t" style="left:693.80px;top:271.38px;font-size:16.4px;line-height:16.4px;color:#1f1f1f;font-weight:400;-webkit-text-stroke:0.35px #1f1f1f;">Biểu đồ trạng thái:</div>
<svg style="position:absolute;left:0;top:0" width="1915" height="950" viewBox="0 0 1915 950" font-family="'Liberation Sans', sans-serif">
<circle cx="1145.4" cy="307" r="7" fill="#b0bec5"/>
<text x="1157.7" y="310.3" font-size="12" fill="#666">IDLE</text>
<circle cx="1200" cy="307" r="7" fill="#42a5f5"/>
<text x="1212.6" y="310.3" font-size="12" fill="#666">WINDING</text>
<circle cx="1281.5" cy="307" r="7" fill="#fb8c00"/>
<text x="1293.5" y="310.3" font-size="12" fill="#666">TRANSFER</text>
<circle cx="1374.2" cy="307" r="7" fill="#e53935"/>
<text x="1386.7" y="310.3" font-size="12" fill="#666">DRYING</text>
<line x1="711.5" y1="323" x2="711.5" y2="378" stroke="#e4e4e4" stroke-width="1"/>
<line x1="760.5" y1="323" x2="760.5" y2="378" stroke="#e4e4e4" stroke-width="1"/>
<line x1="809.5" y1="323" x2="809.5" y2="378" stroke="#e4e4e4" stroke-width="1"/>
<line x1="857.5" y1="323" x2="857.5" y2="378" stroke="#e4e4e4" stroke-width="1"/>
<line x1="906.5" y1="323" x2="906.5" y2="378" stroke="#e4e4e4" stroke-width="1"/>
<line x1="955.5" y1="323" x2="955.5" y2="378" stroke="#e4e4e4" stroke-width="1"/>
<line x1="1003.5" y1="323" x2="1003.5" y2="378" stroke="#e4e4e4" stroke-width="1"/>
<line x1="1052.5" y1="323" x2="1052.5" y2="378" stroke="#e4e4e4" stroke-width="1"/>
<line x1="1100.5" y1="323" x2="1100.5" y2="378" stroke="#e4e4e4" stroke-width="1"/>
<line x1="1149.5" y1="323" x2="1149.5" y2="378" stroke="#e4e4e4" stroke-width="1"/>
<line x1="1198.5" y1="323" x2="1198.5" y2="378" stroke="#e4e4e4" stroke-width="1"/>
<line x1="1246.5" y1="323" x2="1246.5" y2="378" stroke="#e4e4e4" stroke-width="1"/>
<line x1="1295.5" y1="323" x2="1295.5" y2="378" stroke="#e4e4e4" stroke-width="1"/>
<line x1="1344.5" y1="323" x2="1344.5" y2="378" stroke="#e4e4e4" stroke-width="1"/>
<line x1="1392.5" y1="323" x2="1392.5" y2="378" stroke="#e4e4e4" stroke-width="1"/>
<line x1="1441.5" y1="323" x2="1441.5" y2="378" stroke="#e4e4e4" stroke-width="1"/>
<line x1="1489.5" y1="323" x2="1489.5" y2="378" stroke="#e4e4e4" stroke-width="1"/>
<line x1="1538.5" y1="323" x2="1538.5" y2="378" stroke="#e4e4e4" stroke-width="1"/>
<line x1="1587.5" y1="323" x2="1587.5" y2="378" stroke="#e4e4e4" stroke-width="1"/>
<line x1="1635.5" y1="323" x2="1635.5" y2="378" stroke="#e4e4e4" stroke-width="1"/>
<line x1="1684.5" y1="323" x2="1684.5" y2="378" stroke="#e4e4e4" stroke-width="1"/>
<line x1="1733.5" y1="323" x2="1733.5" y2="378" stroke="#e4e4e4" stroke-width="1"/>
<line x1="1781.5" y1="323" x2="1781.5" y2="378" stroke="#e4e4e4" stroke-width="1"/>
<line x1="1830.5" y1="323" x2="1830.5" y2="378" stroke="#e4e4e4" stroke-width="1"/>
<line x1="711.4" y1="370.5" x2="1879" y2="370.5" stroke="#e4e4e4" stroke-width="1"/>
<rect x="1052.31" y="349" width="291.78" height="19" fill="#b0bec5"/>
<rect x="1054.31" y="351.5" width="287.78" height="15" fill="none" stroke="rgba(255,255,255,0.16)" stroke-width="1"/>
<rect x="1344.09" y="349" width="48.63" height="19" fill="#42a5f5"/>
<rect x="1346.09" y="351.5" width="44.63" height="15" fill="none" stroke="rgba(255,255,255,0.16)" stroke-width="1"/>
<rect x="1392.72" y="349" width="48.63" height="19" fill="#fb8c00"/>
<rect x="1394.72" y="351.5" width="44.63" height="15" fill="none" stroke="rgba(255,255,255,0.16)" stroke-width="1"/>
<rect x="1441.35" y="349" width="389.04" height="19" fill="#e53935"/>
<rect x="1443.35" y="351.5" width="385.04" height="15" fill="none" stroke="rgba(255,255,255,0.16)" stroke-width="1"/>
<text x="711.90" y="391.5" font-size="12" fill="#666" text-anchor="middle">12AM</text>
<text x="760.53" y="391.5" font-size="12" fill="#666" text-anchor="middle">1AM</text>
<text x="809.16" y="391.5" font-size="12" fill="#666" text-anchor="middle">2AM</text>
<text x="857.79" y="391.5" font-size="12" fill="#666" text-anchor="middle">3AM</text>
<text x="906.42" y="391.5" font-size="12" fill="#666" text-anchor="middle">4AM</text>
<text x="955.05" y="391.5" font-size="12" fill="#666" text-anchor="middle">5AM</text>
<text x="1003.68" y="391.5" font-size="12" fill="#666" text-anchor="middle">6AM</text>
<text x="1052.31" y="391.5" font-size="12" fill="#666" text-anchor="middle">7AM</text>
<text x="1100.94" y="391.5" font-size="12" fill="#666" text-anchor="middle">8AM</text>
<text x="1149.57" y="391.5" font-size="12" fill="#666" text-anchor="middle">9AM</text>
<text x="1198.20" y="391.5" font-size="12" fill="#666" text-anchor="middle">10AM</text>
<text x="1246.83" y="391.5" font-size="12" fill="#666" text-anchor="middle">11AM</text>
<text x="1295.46" y="391.5" font-size="12" fill="#666" text-anchor="middle">12PM</text>
<text x="1344.09" y="391.5" font-size="12" fill="#666" text-anchor="middle">1PM</text>
<text x="1392.72" y="391.5" font-size="12" fill="#666" text-anchor="middle">2PM</text>
<text x="1441.35" y="391.5" font-size="12" fill="#666" text-anchor="middle">3PM</text>
<text x="1489.98" y="391.5" font-size="12" fill="#666" text-anchor="middle">4PM</text>
<text x="1538.61" y="391.5" font-size="12" fill="#666" text-anchor="middle">5PM</text>
<text x="1587.24" y="391.5" font-size="12" fill="#666" text-anchor="middle">6PM</text>
<text x="1635.87" y="391.5" font-size="12" fill="#666" text-anchor="middle">7PM</text>
<text x="1684.50" y="391.5" font-size="12" fill="#666" text-anchor="middle">8PM</text>
<text x="1733.13" y="391.5" font-size="12" fill="#666" text-anchor="middle">9PM</text>
<text x="1781.76" y="391.5" font-size="12" fill="#666" text-anchor="middle">10PM</text>
<text x="1830.39" y="391.5" font-size="12" fill="#666" text-anchor="middle">11PM</text>
<line x1="720.5" y1="489" x2="720.5" y2="905.5" stroke="#e1e1e1" stroke-width="1"/>
<line x1="792.5" y1="489" x2="792.5" y2="905.5" stroke="#e1e1e1" stroke-width="1"/>
<line x1="864.5" y1="489" x2="864.5" y2="905.5" stroke="#e1e1e1" stroke-width="1"/>
<line x1="936.5" y1="489" x2="936.5" y2="905.5" stroke="#e1e1e1" stroke-width="1"/>
<line x1="1008.5" y1="489" x2="1008.5" y2="905.5" stroke="#e1e1e1" stroke-width="1"/>
<line x1="1079.5" y1="489" x2="1079.5" y2="905.5" stroke="#e1e1e1" stroke-width="1"/>
<line x1="1151.5" y1="489" x2="1151.5" y2="905.5" stroke="#e1e1e1" stroke-width="1"/>
<line x1="1223.5" y1="489" x2="1223.5" y2="905.5" stroke="#e1e1e1" stroke-width="1"/>
<line x1="1295.5" y1="489" x2="1295.5" y2="905.5" stroke="#e1e1e1" stroke-width="1"/>
<line x1="1367.5" y1="489" x2="1367.5" y2="905.5" stroke="#e1e1e1" stroke-width="1"/>
<line x1="1439.5" y1="489" x2="1439.5" y2="905.5" stroke="#e1e1e1" stroke-width="1"/>
<line x1="1511.5" y1="489" x2="1511.5" y2="905.5" stroke="#e1e1e1" stroke-width="1"/>
<line x1="1583.5" y1="489" x2="1583.5" y2="905.5" stroke="#e1e1e1" stroke-width="1"/>
<line x1="1655.5" y1="489" x2="1655.5" y2="905.5" stroke="#e1e1e1" stroke-width="1"/>
<line x1="1727.5" y1="489" x2="1727.5" y2="905.5" stroke="#e1e1e1" stroke-width="1"/>
<line x1="1799.5" y1="489" x2="1799.5" y2="905.5" stroke="#e1e1e1" stroke-width="1"/>
<line x1="1871.5" y1="489" x2="1871.5" y2="905.5" stroke="#e1e1e1" stroke-width="1"/>
<line x1="712" y1="897.5" x2="1872" y2="897.5" stroke="#e1e1e1" stroke-width="1"/>
<text x="709.5" y="900.40" font-size="12" fill="#666" text-anchor="end">0</text>
<line x1="712" y1="838.5" x2="1872" y2="838.5" stroke="#e1e1e1" stroke-width="1"/>
<text x="709.5" y="842.11" font-size="12" fill="#666" text-anchor="end">10</text>
<line x1="712" y1="780.5" x2="1872" y2="780.5" stroke="#e1e1e1" stroke-width="1"/>
<text x="709.5" y="783.83" font-size="12" fill="#666" text-anchor="end">20</text>
<line x1="712" y1="722.5" x2="1872" y2="722.5" stroke="#e1e1e1" stroke-width="1"/>
<text x="709.5" y="725.54" font-size="12" fill="#666" text-anchor="end">30</text>
<line x1="712" y1="663.5" x2="1872" y2="663.5" stroke="#e1e1e1" stroke-width="1"/>
<text x="709.5" y="667.26" font-size="12" fill="#666" text-anchor="end">40</text>
<line x1="712" y1="605.5" x2="1872" y2="605.5" stroke="#e1e1e1" stroke-width="1"/>
<text x="709.5" y="608.97" font-size="12" fill="#666" text-anchor="end">50</text>
<line x1="712" y1="547.5" x2="1872" y2="547.5" stroke="#e1e1e1" stroke-width="1"/>
<text x="709.5" y="550.69" font-size="12" fill="#666" text-anchor="end">60</text>
<line x1="712" y1="489.5" x2="1872" y2="489.5" stroke="#e1e1e1" stroke-width="1"/>
<text x="709.5" y="492.40" font-size="12" fill="#666" text-anchor="end">70</text>
<line x1="712" y1="897.5" x2="1872" y2="897.5" stroke="#d4d4d4" stroke-width="1"/>
<rect x="1177.59" y="891.27" width="21" height="5.83" fill="#36a2eb"/>
<rect x="1249.53" y="815.50" width="21" height="81.60" fill="#36a2eb"/>
<rect x="1321.47" y="605.67" width="21" height="291.43" fill="#36a2eb"/>
<rect x="1393.41" y="757.21" width="21" height="139.89" fill="#ff6384"/>
<rect x="1393.41" y="628.99" width="21" height="128.23" fill="#36a2eb"/>
<rect x="1465.34" y="588.19" width="21" height="308.91" fill="#ff6384"/>
<rect x="1537.28" y="733.90" width="21" height="163.20" fill="#ff6384"/>
<rect x="1537.28" y="564.87" width="21" height="169.03" fill="#36a2eb"/>
<rect x="1609.22" y="541.56" width="21" height="355.54" fill="#36a2eb"/>
<rect x="1681.16" y="541.56" width="21" height="355.54" fill="#36a2eb"/>
<rect x="1753.09" y="494.93" width="21" height="402.17" fill="#36a2eb"/>
<rect x="1825.03" y="728.07" width="21" height="169.03" fill="#36a2eb"/>
<text x="756.47" y="919" font-size="12" fill="#666" text-anchor="middle">00:00</text>
<text x="828.41" y="919" font-size="12" fill="#666" text-anchor="middle">01:00</text>
<text x="900.34" y="919" font-size="12" fill="#666" text-anchor="middle">02:00</text>
<text x="972.28" y="919" font-size="12" fill="#666" text-anchor="middle">03:00</text>
<text x="1044.22" y="919" font-size="12" fill="#666" text-anchor="middle">04:00</text>
<text x="1116.16" y="919" font-size="12" fill="#666" text-anchor="middle">05:00</text>
<text x="1188.09" y="919" font-size="12" fill="#666" text-anchor="middle">06:00</text>
<text x="1260.03" y="919" font-size="12" fill="#666" text-anchor="middle">07:00</text>
<text x="1331.97" y="919" font-size="12" fill="#666" text-anchor="middle">08:00</text>
<text x="1403.91" y="919" font-size="12" fill="#666" text-anchor="middle">09:00</text>
<text x="1475.84" y="919" font-size="12" fill="#666" text-anchor="middle">10:00</text>
<text x="1547.78" y="919" font-size="12" fill="#666" text-anchor="middle">11:00</text>
<text x="1619.72" y="919" font-size="12" fill="#666" text-anchor="middle">12:00</text>
<text x="1691.66" y="919" font-size="12" fill="#666" text-anchor="middle">13:00</text>
<text x="1763.59" y="919" font-size="12" fill="#666" text-anchor="middle">14:00</text>
<text x="1835.53" y="919" font-size="12" fill="#666" text-anchor="middle">15:00</text>
<path d="M756.47 897.10 C761.50 897.10 823.37 897.10 828.41 897.10 C833.44 897.10 895.31 897.10 900.34 897.10 C905.38 897.10 967.25 897.10 972.28 897.10 C977.32 897.10 1039.18 897.10 1044.22 897.10 C1049.25 897.10 1111.13 897.10 1116.16 897.10 C1121.20 896.90 1183.98 893.61 1188.09 891.27 C1194.05 887.89 1256.81 821.90 1260.03 815.50 C1266.88 801.91 1324.46 615.41 1331.97 605.67 C1334.53 602.35 1399.10 629.57 1403.91 628.99 C1409.17 628.35 1470.58 590.53 1475.84 588.19 C1480.65 586.04 1542.75 566.50 1547.78 564.87 C1552.82 563.24 1614.56 542.39 1619.72 541.56 C1624.63 540.76 1687.06 543.05 1691.66 541.56 C1697.13 539.78 1760.98 491.53 1763.59 494.93 C1771.05 504.59 1830.50 711.75 1835.53 728.07" fill="none" stroke="rgba(0,0,0,0.11)" stroke-width="4" stroke-linejoin="round"/>
<circle cx="756.47" cy="897.10" r="4.4" fill="rgba(0,0,0,0.07)"/><circle cx="756.47" cy="897.10" r="3" fill="#454545"/>
<circle cx="828.41" cy="897.10" r="4.4" fill="rgba(0,0,0,0.07)"/><circle cx="828.41" cy="897.10" r="3" fill="#454545"/>
<circle cx="900.34" cy="897.10" r="4.4" fill="rgba(0,0,0,0.07)"/><circle cx="900.34" cy="897.10" r="3" fill="#454545"/>
<circle cx="972.28" cy="897.10" r="4.4" fill="rgba(0,0,0,0.07)"/><circle cx="972.28" cy="897.10" r="3" fill="#454545"/>
<circle cx="1044.22" cy="897.10" r="4.4" fill="rgba(0,0,0,0.07)"/><circle cx="1044.22" cy="897.10" r="3" fill="#454545"/>
<circle cx="1116.16" cy="897.10" r="4.4" fill="rgba(0,0,0,0.07)"/><circle cx="1116.16" cy="897.10" r="3" fill="#454545"/>
<circle cx="1188.09" cy="891.27" r="4.4" fill="rgba(0,0,0,0.07)"/><circle cx="1188.09" cy="891.27" r="3" fill="#454545"/>
<circle cx="1260.03" cy="815.50" r="4.4" fill="rgba(0,0,0,0.07)"/><circle cx="1260.03" cy="815.50" r="3" fill="#454545"/>
<circle cx="1331.97" cy="605.67" r="4.4" fill="rgba(0,0,0,0.07)"/><circle cx="1331.97" cy="605.67" r="3" fill="#454545"/>
<circle cx="1403.91" cy="628.99" r="4.4" fill="rgba(0,0,0,0.07)"/><circle cx="1403.91" cy="628.99" r="3" fill="#454545"/>
<circle cx="1475.84" cy="588.19" r="4.4" fill="rgba(0,0,0,0.07)"/><circle cx="1475.84" cy="588.19" r="3" fill="#454545"/>
<circle cx="1547.78" cy="564.87" r="4.4" fill="rgba(0,0,0,0.07)"/><circle cx="1547.78" cy="564.87" r="3" fill="#454545"/>
<circle cx="1619.72" cy="541.56" r="4.4" fill="rgba(0,0,0,0.07)"/><circle cx="1619.72" cy="541.56" r="3" fill="#454545"/>
<circle cx="1691.66" cy="541.56" r="4.4" fill="rgba(0,0,0,0.07)"/><circle cx="1691.66" cy="541.56" r="3" fill="#454545"/>
<circle cx="1763.59" cy="494.93" r="4.4" fill="rgba(0,0,0,0.07)"/><circle cx="1763.59" cy="494.93" r="3" fill="#454545"/>
<circle cx="1835.53" cy="728.07" r="4.4" fill="rgba(0,0,0,0.07)"/><circle cx="1835.53" cy="728.07" r="3" fill="#454545"/>
<rect x="998" y="467" width="40" height="12" fill="#e6e6e6" stroke="#d6d6d6" stroke-width="3"/>
<text x="1044.3" y="476" font-size="12" fill="#666">Tổng điện năng tiêu thụ</text>
<rect x="1179.7" y="467" width="40" height="12" fill="#ff6384"/>
<text x="1226" y="476" font-size="12" fill="#666">Giờ cao điểm</text>
<rect x="1307.5" y="467" width="40" height="12" fill="#36a2eb"/>
<text x="1353.6" y="476" font-size="12" fill="#666">Giờ bình thường</text>
<rect x="1452.5" y="467" width="40" height="12" fill="#ffcd56"/>
<text x="1498.9" y="476" font-size="12" fill="#666">Giờ thấp điểm</text>
</svg>
<div class="t" style="left:693.80px;top:434.18px;font-size:16.4px;line-height:16.4px;color:#1f1f1f;font-weight:400;-webkit-text-stroke:0.35px #1f1f1f;">Biểu đồ tiêu thụ</div>
<div style="position:absolute;left:1350px;top:425px;width:120px;height:32px;box-sizing:border-box;border:1px solid #d9d9d9;border-radius:6px;background:#fff"></div>
<div class="t" style="left:1385.50px;top:434.37px;font-size:14px;line-height:14px;color:#1f1f1f;font-weight:400;">Ngày</div>
<svg style="position:absolute;left:1447px;top:436px" width="12" height="9" viewBox="0 0 12 9"><path d="M1 1.5 L6 7 L11 1.5" fill="none" stroke="#bfbfbf" stroke-width="1.2"/></svg>
<div style="position:absolute;left:1475px;top:425px;width:404px;height:32px;box-sizing:border-box;border:1px solid #d9d9d9;border-radius:6px;background:#fff"></div>
<div class="t" style="left:1487.80px;top:434.82px;font-size:13.7px;line-height:13.7px;color:#1f1f1f;font-weight:400;">14-11-2025 00:00:00</div>
<div class="t" style="left:1684.60px;top:434.82px;font-size:13.7px;line-height:13.7px;color:#1f1f1f;font-weight:400;">14-11-2025 23:59:59</div>
<svg style="position:absolute;left:1661px;top:437px" width="15" height="8" viewBox="0 0 15 8"><path d="M1 5 H13.5 L10.5 2.5" fill="none" stroke="#bfbfbf" stroke-width="1.1"/></svg>
<svg style="position:absolute;left:1853px;top:434px" width="14" height="14" viewBox="0 0 14 14"><rect x="1" y="2.5" width="12" height="10.5" fill="none" stroke="#bfbfbf" stroke-width="1.1"/><path d="M1 5.8 H13 M4 0.8 V3.5 M10 0.8 V3.5" stroke="#bfbfbf" stroke-width="1.1"/></svg>
</body></html>
